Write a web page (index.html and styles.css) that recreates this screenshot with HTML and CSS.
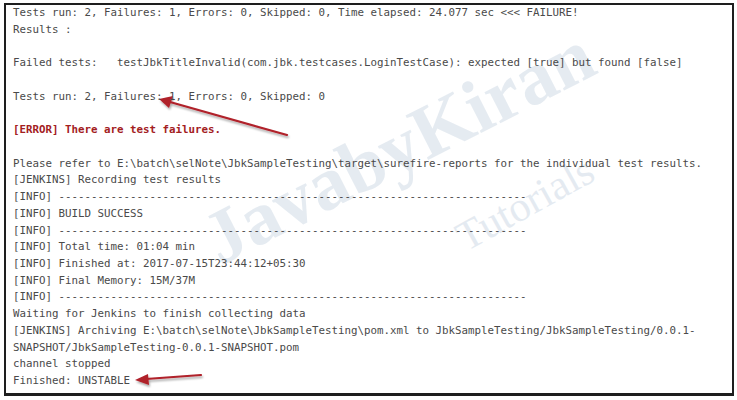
FILE: index.html
```html
<!DOCTYPE html>
<html>
<head>
<meta charset="utf-8">
<link rel="stylesheet" href="styles.css">
</head>
<body>
<div class="frame">
<pre class="console">Tests run: 2, Failures: 1, Errors: 0, Skipped: 0, Time elapsed: 24.077 sec &lt;&lt;&lt; FAILURE!
Results :

Failed tests:   testJbkTitleInvalid(com.jbk.testcases.LoginTestCase): expected [true] but found [false]

Tests run: 2, Failures: 1, Errors: 0, Skipped: 0

<span class="error">[ERROR] There are test failures.</span>

Please refer to E:\batch\selNote\JbkSampleTesting\target\surefire-reports for the individual test results.
[JENKINS] Recording test results
[INFO] ------------------------------------------------------------------------
[INFO] BUILD SUCCESS
[INFO] ------------------------------------------------------------------------
[INFO] Total time: 01:04 min
[INFO] Finished at: 2017-07-15T23:44:12+05:30
[INFO] Final Memory: 15M/37M
[INFO] ------------------------------------------------------------------------
Waiting for Jenkins to finish collecting data
[JENKINS] Archiving E:\batch\selNote\JbkSampleTesting\pom.xml to JbkSampleTesting/JbkSampleTesting/0.0.1-
SNAPSHOT/JbkSampleTesting-0.0.1-SNAPSHOT.pom
channel stopped
Finished: UNSTABLE</pre>
<svg class="overlay" width="737" height="400" viewBox="0 0 737 400">
  <defs>
    <filter id="sh" x="-20%" y="-20%" width="140%" height="140%">
      <feGaussianBlur in="SourceAlpha" stdDeviation="1.2"/>
      <feOffset dx="1" dy="2"/>
      <feComponentTransfer><feFuncA type="linear" slope="0.35"/></feComponentTransfer>
      <feMerge><feMergeNode/><feMergeNode in="SourceGraphic"/></feMerge>
    </filter>
  </defs>
  <g class="wm">
    <text class="wm-big" x="0" y="0" transform="translate(220,266) rotate(-27)">JavabyKiran</text>
    <text class="wm-small" x="0" y="0" transform="translate(466,252) rotate(-29)">Tutorials</text>
  </g>
  <g filter="url(#sh)">
    <line x1="287" y1="135" x2="170" y2="102" class="arrow"/>
    <polygon points="159,99 173,96 169,108" class="head"/>
    <line x1="201" y1="375" x2="146" y2="379" class="arrow"/>
    <polygon points="135,380 148,374 149,385" class="head"/>
  </g>
</svg>
</div>
</body>
</html>
```
FILE: styles.css
```css
html, body {
  margin: 0;
  padding: 0;
  background: #ffffff;
}
body {
  width: 737px;
  height: 400px;
  overflow: hidden;
  position: relative;
}
.frame {
  position: relative;
  margin: 3px 0 0 4px;
  width: 726px;
  height: 388px;
  border: 2px solid #1e1e1e;
  border-bottom-width: 3px;
  background: #fff;
  overflow: hidden;
}
.console {
  margin: 0;
  padding: 0 0 0 7px;
  font-family: "DejaVu Sans Mono", "Liberation Mono", monospace;
  font-size: 10.8px;
  line-height: 16.73px;
  color: #4a4a4a;
  white-space: pre;
  position: relative;
  z-index: 1;
}
.error {
  color: #a3201e;
  font-weight: bold;
}
.overlay {
  position: absolute;
  left: -6px;
  top: -5px;
  pointer-events: none;
}
.wm-big {
  font-family: "Liberation Serif", serif;
  font-weight: bold;
  font-size: 76px;
  fill: #d3dde8;
  fill-opacity: 0.6;
}
.wm-small {
  font-family: "Liberation Serif", serif;
  font-size: 42px;
  fill: #d3dde8;
  fill-opacity: 0.6;
}
.arrow {
  stroke: #b0202a;
  stroke-width: 2.2;
  stroke-linecap: round;
}
.head {
  fill: #b0202a;
}
```
